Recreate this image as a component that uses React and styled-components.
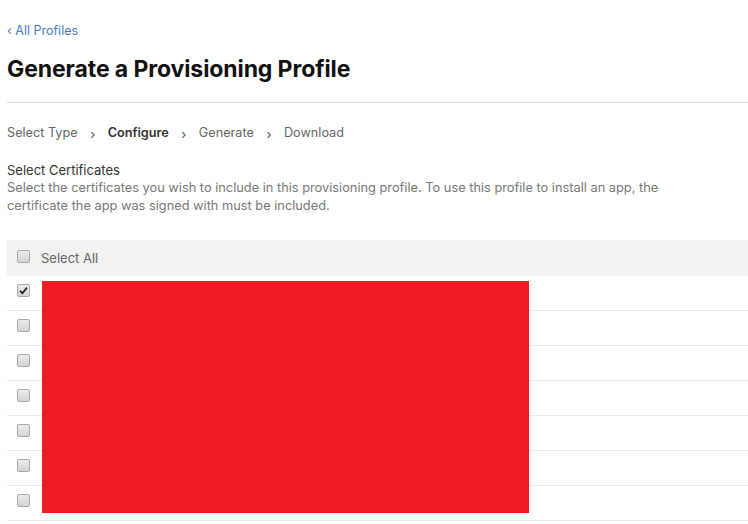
import React from "react";
import styled, { createGlobalStyle } from "styled-components";

const Global = createGlobalStyle`
  html, body { margin: 0; padding: 0; background: #fff; }
  body { font-family: Inter, "Noto Sans", sans-serif; -webkit-font-smoothing: antialiased; }
`;

const Page = styled.div`
  position: relative;
  padding: 19px 0 0 7px;
  width: 748px;
  box-sizing: border-box;
`;

const BackLink = styled.a`
  display: inline-block;
  font-size: 12.5px;
  color: #4a7bbf;
  text-decoration: none;
  line-height: 16px;
`;

const Title = styled.h1`
  margin: 16px 0 0;
  font-size: 23px;
  font-weight: 700;
  color: #111;
  line-height: 28px;
  letter-spacing: -0.1px;
`;

const Divider = styled.hr`
  margin: 19px 0 0;
  border: 0;
  border-top: 1px solid #dcdcdc;
`;

const Steps = styled.div`
  display: flex;
  align-items: center;
  margin-top: 21px;
  font-size: 12.7px;
  color: #666;
  line-height: 18px;
`;

const Step = styled.span`
  font-weight: ${(p) => (p.$active ? 600 : 400)};
  color: ${(p) => (p.$active ? "#333" : "#666")};
`;

const Chevron = styled.span`
  display: inline-flex;
  width: 30px;
  justify-content: center;
  color: #555;
  font-size: 13px;
  transform: translateY(1px);
`;

const Section = styled.div`
  margin-top: 19px;
`;

const SectionTitle = styled.div`
  font-size: 13px;
  color: #333;
  line-height: 18px;
`;

const Desc = styled.div`
  font-size: 12.8px;
  color: #777;
  line-height: 18px;
  width: 680px;
`;

const Table = styled.div`
  margin-top: 25px;
`;

const HeaderRow = styled.div`
  display: flex;
  align-items: center;
  height: 36px;
  background: #f2f2f2;
  padding-left: 10px;
  gap: 11px;
  font-size: 13px;
  color: #666;
`;

const Row = styled.div`
  display: flex;
  align-items: center;
  height: 34px;
  border-bottom: 1px solid #e8e8e8;
  padding-left: 10px;
`;

const Box = styled.span`
  display: inline-block;
  position: relative;
  width: 11px;
  height: 11px;
  border: 1px solid #a9a9a9;
  border-radius: 2px;
  background: linear-gradient(#ececec, #d4d4d4);
  box-sizing: content-box;
  transform: translateY(${(p) => p.$dy || 0}px);
`;

const Tick = styled.svg`
  position: absolute;
  left: 1px;
  top: 1px;
`;

const Redaction = styled.div`
  position: absolute;
  left: 42px;
  top: 281px;
  width: 487px;
  height: 232px;
  background: #ed1c24;
`;

function Check({ checked, dy }) {
  return (
    <Box $dy={dy}>
      {checked && (
        <Tick width="9" height="9" viewBox="0 0 9 9">
          <path d="M1 4.8 L3.4 7.2 L8 1.6" stroke="#222" strokeWidth="1.8" fill="none" />
        </Tick>
      )}
    </Box>
  );
}

export default function App() {
  const rows = [true, false, false, false, false, false, false];
  return (
    <>
      <Global />
      <Page>
        <BackLink href="#">‹ All Profiles</BackLink>
        <Title>Generate a Provisioning Profile</Title>
        <Divider />
        <Steps>
          <Step>Select Type</Step>
          <Chevron>›</Chevron>
          <Step $active>Configure</Step>
          <Chevron>›</Chevron>
          <Step>Generate</Step>
          <Chevron>›</Chevron>
          <Step>Download</Step>
        </Steps>
        <Section>
          <SectionTitle>Select Certificates</SectionTitle>
          <Desc>
            Select the certificates you wish to include in this provisioning profile. To use this profile to install an app, the certificate the app was signed with must be included.
          </Desc>
        </Section>
        <Table>
          <HeaderRow>
            <Check dy={-2} />
            <span>Select All</span>
          </HeaderRow>
          {rows.map((c, i) => (
            <Row key={i}>
              <Check checked={c} dy={-3} />
            </Row>
          ))}
        </Table>
        <Redaction />
      </Page>
    </>
  );
}
